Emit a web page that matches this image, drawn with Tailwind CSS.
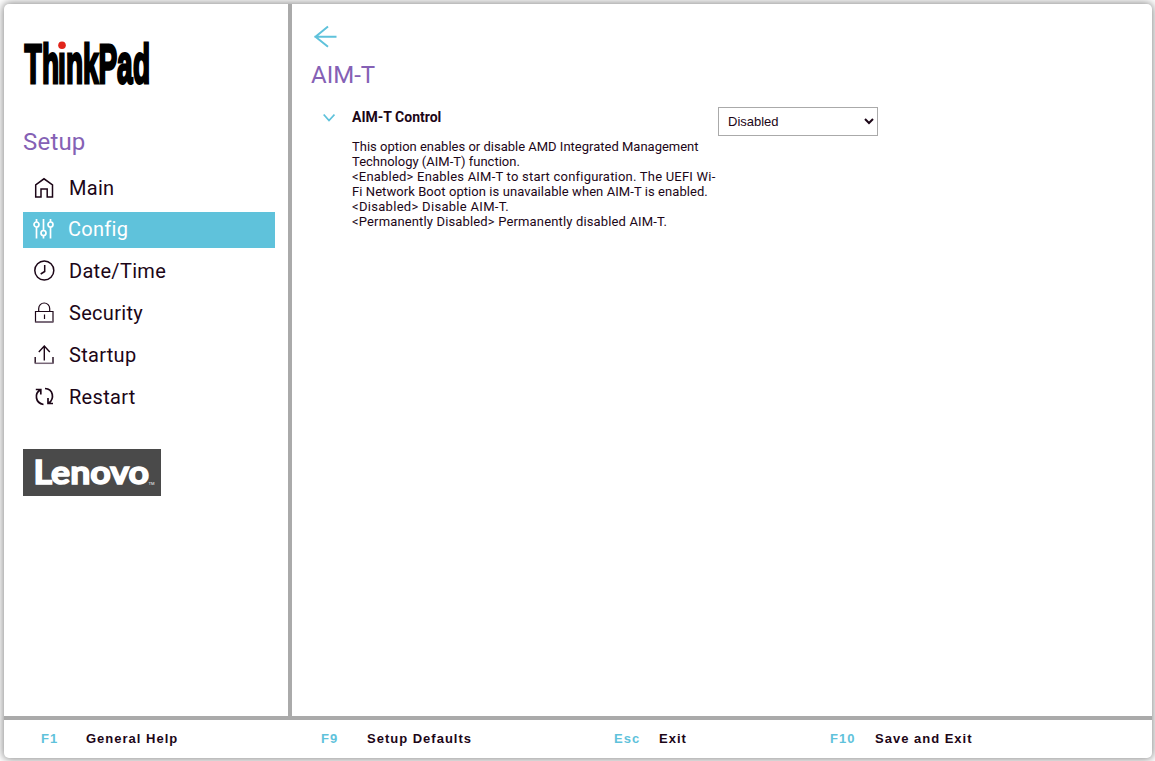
<!DOCTYPE html>
<html lang="en">
<head>
    <meta charset="utf-8">
    <title>ThinkPad Setup</title>
    <script src="https://cdn.jsdelivr.net/npm/@tailwindcss/browser@4"></script>
</head>
<body class="bg-white h-screen overflow-hidden pt-1 pl-1 pr-[3px] pb-[3px] text-[#1c0617] font-[Roboto,sans-serif]">
    <div class="h-full flex flex-col bg-white rounded-[5px] shadow-[0_0_8px_1px_#888] overflow-hidden">
        <div class="flex flex-1 min-h-0">
            <!-- Sidebar -->
            <aside class="w-[288px] shrink-0 border-r-4 border-[#aaa] pl-[19px] pr-[13px] flex flex-col">
                <svg class="mt-9 w-[130px] h-[46px] shrink-0 overflow-visible" viewBox="0 0 130 46">
                    <text transform="translate(1 43) scale(.5 1)" x="1 36 68 84 118 149 186 218" y="0" font-family="Liberation Sans" font-weight="bold" font-size="56" stroke="#000" stroke-width="3">ThinkPad</text>
                    <rect x="35" y="0" width="8.500" height="10.5" fill="#fff"/>
                    <circle cx="39" cy="5.3" r="3.8" fill="#e1251b"/>
                </svg>
                <h1 class="mt-[40px] h-8 leading-8 text-[24px] tracking-[0.2px] text-[#8561b5]">Setup</h1>
                <nav class="mt-3 flex flex-col text-[20px] tracking-[0.3px]">
                    <a class="flex items-center h-9 pl-[10px] gap-[14px]">
                        <svg class="size-[22px]" viewBox="0 0 22 22" fill="none" stroke="currentColor" stroke-width="1.5"><path d="M2.7 20V8L11 1.8 19.5 8v12h-5.300v-8H8v8z"/></svg>
                        Main
                    </a>
                    <a class="mt-1.5 flex items-center h-9 pl-[9px] pb-0.5 gap-[14px] bg-[#5fc2db] text-white">
                        <svg class="size-[22px]" viewBox="0 0 22 22" fill="none" stroke="currentColor" stroke-width="1.7"><path d="M4.5 1v3M4.5 9v11.500M11.500 1v11.500M11.500 17.500v3M18.500 1v3M18.500 9v11.500"/><circle cx="4.5" cy="6.500" r="2.500"/><circle cx="11.500" cy="15" r="2.500"/><circle cx="18.500" cy="6.500" r="2.500"/></svg>
                        Config
                    </a>
                    <a class="mt-[5px] flex items-center h-9 pl-[10px] gap-[14px]">
                        <svg class="size-[22px]" viewBox="0 0 22 22" fill="none" stroke="currentColor" stroke-width="1.5"><circle cx="11.300" cy="10.500" r="9.500"/><path d="M11.700 5v6.500l-4 2.500"/></svg>
                        Date/Time
                    </a>
                    <a class="mt-1.5 flex items-center h-9 pl-[10px] gap-[14px]">
                        <svg class="size-[22px]" viewBox="0 0 22 22" fill="none" stroke="currentColor" stroke-width="1.200"><path d="M2.500 9.500h17.500v10.500H2.500zM5.700 9.500V6.500a5.500 5.500 0 0 1 11 0v3M11.500 12.500v4.500"/><path d="M2.500 20h17.500" stroke="#776677" stroke-width="1.500"/></svg>
                        Security
                    </a>
                    <a class="mt-1.5 flex items-center h-9 pl-[10px] gap-[14px]">
                        <svg class="size-[22px]" viewBox="0 0 22 22" fill="none" stroke="currentColor" stroke-width="1.400"><path d="M2.200 13v6.500M20 13v6.500M11.300 2v14.500M5.800 8l5.500-6 5.500 6"/><path d="M2 19.300h18.500" stroke="#776677" stroke-width="1.500"/></svg>
                        Startup
                    </a>
                    <a class="mt-1.5 flex items-center h-9 pl-[10px] gap-[14px]">
                        <svg class="size-[22px]" viewBox="0 0 22 22" fill="none" stroke="currentColor" stroke-width="1.700"><path d="M10.500 18.500C2 17 1.500 7.500 7 4M2.800 3.500h5v5M12 2.500c8.500.500 9.500 10 4 14.500M20 17.500h-5v-5.500"/></svg>
                        Restart
                    </a>
                </nav>
                <svg class="mt-[34px] w-[138px] h-[47px] shrink-0 bg-[#4a4a4a]" viewBox="0 0 138 47" fill="#fff">
                    <text x="10.500" y="34.500" textLength="115.500" lengthAdjust="spacingAndGlyphs" font-family="Lato" font-weight="700" font-size="32" stroke="#fff" stroke-width="1.500">Lenovo</text>
                    <text x="125.500" y="36" textLength="6" lengthAdjust="spacingAndGlyphs" font-family="Liberation Sans" font-size="4">TM</text>
                </svg>
            </aside>

            <!-- Page content -->
            <main class="flex-1 pl-[18px] pt-[21px]">
                <svg class="ml-[3px] size-6" viewBox="0 0 24 24" fill="none" stroke="#5fc2db" stroke-width="2"><path d="M23.500 11.800H1.500M15 1.500L2.500 11.800l12.500 10"/></svg>
                <h2 class="mt-2.5 ml-px h-8 leading-8 text-[24px] text-[#8561b5]">AIM-T</h2>
                <div class="flex mt-4">
                    <svg class="ml-[13px] mt-[6px] w-3 h-2.5" viewBox="0 0 12 10" fill="none" stroke="#5fc2db" stroke-width="1.800"><path d="M.7 1.500L6 7.500l5.500-6"/></svg>
                    <div class="ml-[17px] w-[366px]">
                        <h3 class="h-5 leading-[21px] text-[14px] font-bold">AIM-T Control</h3>
                        <p class="mt-3 text-[13px] leading-[15px] whitespace-nowrap">This option enables or disable AMD Integrated Management<br>Technology (AIM-T) function.<br><span class="tracking-[0.21px]">&lt;Enabled&gt; Enables AIM-T to start configuration. The UEFI Wi-</span><br><span class="tracking-[0.07px]">Fi Network Boot option is unavailable when AIM-T is enabled.</span><br><span class="tracking-[0.3px]">&lt;Disabled&gt; Disable AIM-T.</span><br><span class="tracking-[0.15px]">&lt;Permanently Disabled&gt; Permanently disabled AIM-T.</span></p>
                    </div>
                    <div class="w-40 h-[29px] border border-[#aaa] flex items-center justify-between pl-[9px] pr-[3px] text-[13px] font-['Liberation_Sans',sans-serif]">
                        Disabled
                        <svg class="w-2.5 h-2" viewBox="0 0 10 8" fill="none" stroke="currentColor" stroke-width="2"><path d="M1 1l4 4 4-4"/></svg>
                    </div>
                </div>
            </main>
        </div>

        <!-- Key legend -->
        <footer class="h-[42px] shrink-0 border-t-4 border-[#aaa] flex items-center pl-[37px] text-[13px] font-bold tracking-[1px] font-['Liberation_Sans',sans-serif]">
            <div class="w-[280px] flex"><span class="w-[45px] text-[#5fc2db]">F1</span>General Help</div>
            <div class="w-[293px] flex"><span class="w-[46px] text-[#5fc2db]">F9</span>Setup Defaults</div>
            <div class="w-[216px] flex"><span class="w-[45px] text-[#5fc2db]">Esc</span>Exit</div>
            <div class="flex"><span class="w-[45px] text-[#5fc2db]">F10</span>Save and Exit</div>
        </footer>
    </div>
</body>
</html>
